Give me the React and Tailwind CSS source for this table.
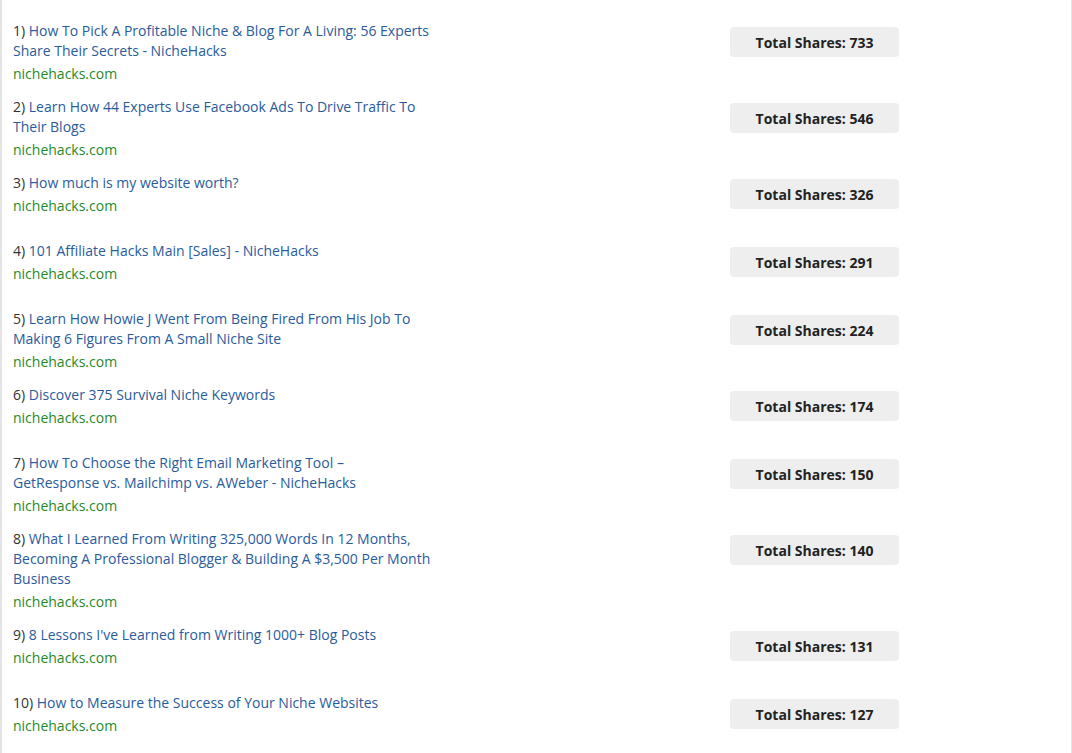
import React from 'react';

const posts = [
  { title: 'How To Pick A Profitable Niche & Blog For A Living: 56 Experts Share Their Secrets - NicheHacks', shares: 733 },
  { title: 'Learn How 44 Experts Use Facebook Ads To Drive Traffic To Their Blogs', shares: 546 },
  { title: 'How much is my website worth?', shares: 326 },
  { title: '101 Affiliate Hacks Main [Sales] - NicheHacks', shares: 291 },
  { title: 'Learn How Howie J Went From Being Fired From His Job To Making 6 Figures From A Small Niche Site', shares: 224 },
  { title: 'Discover 375 Survival Niche Keywords', shares: 174 },
  { title: 'How To Choose the Right Email Marketing Tool – GetResponse vs. Mailchimp vs. AWeber - NicheHacks', shares: 150 },
  { title: 'What I Learned From Writing 325,000 Words In 12 Months, Becoming A Professional Blogger & Building A $3,500 Per Month Business', shares: 140 },
  { title: "8 Lessons I've Learned from Writing 1000+ Blog Posts", shares: 131 },
  { title: 'How to Measure the Success of Your Niche Websites', shares: 127 },
];

const App = () => {
  return (
    <div
      className="min-h-[753px] w-[1072px] bg-white border-l-2 border-r border-[#e3e3e3] text-[14px] text-[#333]"
      style={{ fontFamily: '"Open Sans", "Liberation Sans", sans-serif' }}
    >
      <div className="pt-[21px] pl-[11px]">
        {posts.map((post, i) => (
          <div key={i} className="flex items-start pb-[13px]">
            {/* Title and domain */}
            <div className="w-[420px] shrink-0">
              <div className="leading-5">
                {i + 1}){' '}
                <a href="#" className="text-[#2a5b9c] no-underline">
                  {post.title}
                </a>
              </div>
              <div className="mt-[3px] leading-5 text-[#1f8a2a]">nichehacks.com</div>
            </div>

            {/* Share count */}
            <div className="ml-[297px] h-[55px] pt-[6px]">
              <div className="flex h-[30px] w-[169px] items-center justify-center rounded bg-[#eeeeee] font-bold text-[#222]">
                Total Shares: {post.shares}
              </div>
            </div>
          </div>
        ))}
      </div>
    </div>
  );
};

export default App;
